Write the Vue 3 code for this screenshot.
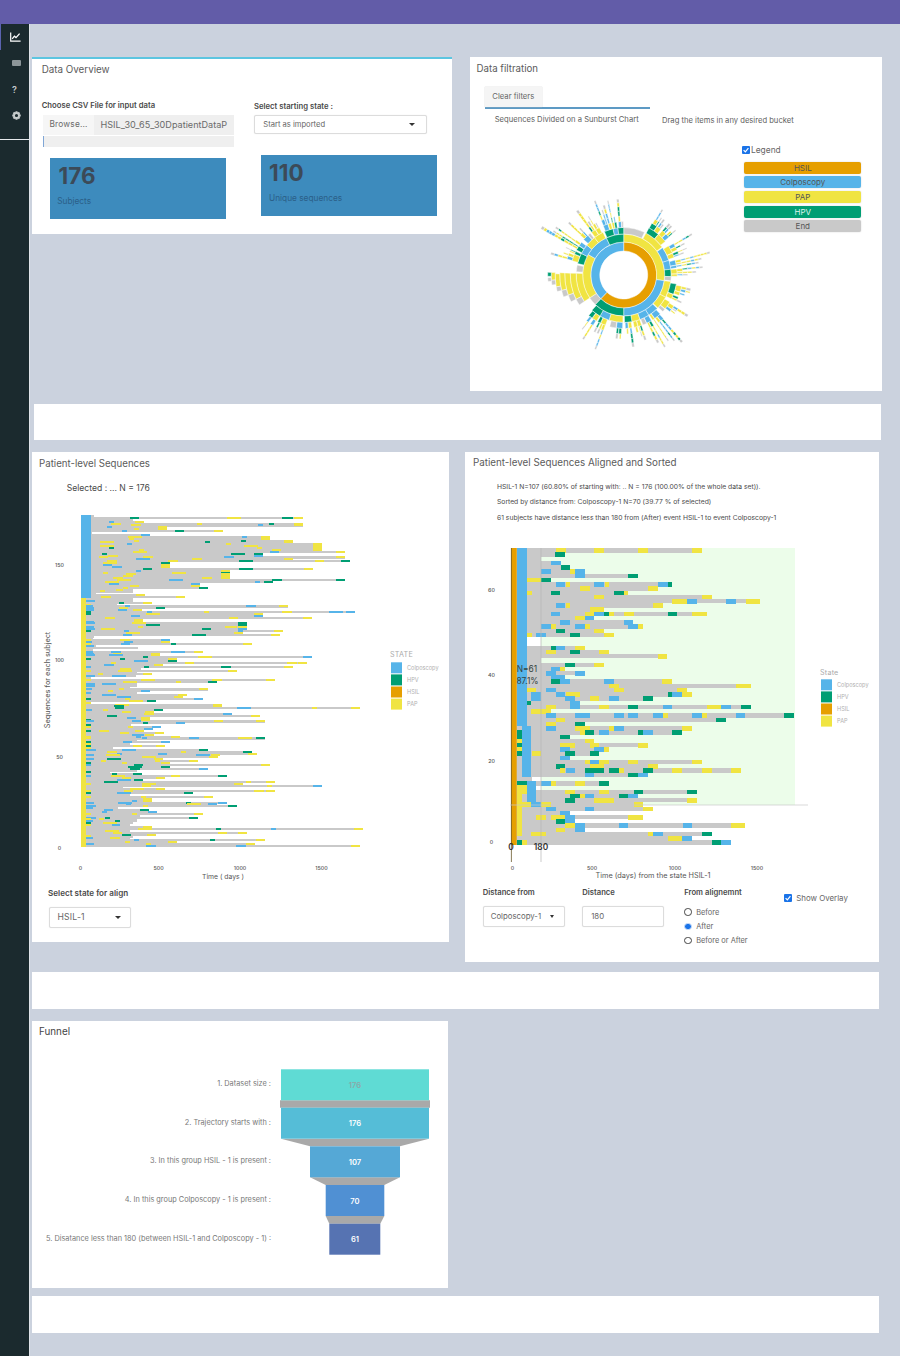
<script setup>
const C = { o: '#e69f00', b: '#56b4e9', y: '#f0e442', g: '#009e73', e: '#c9c9c9' }

function rng(seed) {
  let a = seed
  return () => {
    a |= 0; a = (a + 0x6d2b79f5) | 0
    let t = Math.imul(a ^ (a >>> 15), 1 | a)
    t = (t + Math.imul(t ^ (t >>> 7), 61 | t)) ^ t
    return ((t ^ (t >>> 14)) >>> 0) / 4294967296
  }
}

/* ---------- patient-level chart: [zoomY, zoomX] of the visible row ends ---------- */
const upper = [[196,820],[201,310],[213,820],[218,820],[224,410],[236,580],[252,720],[264,790],[276,875],[282,875],[287,875],[292,875],[297,945],[303,700],[309,700],[314,945],[320,790],[326,960],[337,420],[353,850],[359,600],[365,600],[370,600],[376,600],[382,945],[388,730],[394,510],[405,535],[411,310],[417,310],[433,465],[438,310],[444,310],[450,365],[455,260],[461,775],[466,340],[472,335],[478,690],[483,975],[489,700],[495,845],[500,690],[506,340],[512,650],[518,650],[524,650],[530,650],[535,760],[541,640],[546,540],[551,750],[563,420],[568,330],[574,320],[579,665],[600,520],[608,390],[614,845],[620,440],[631,830],[637,400],[643,790],[649,240],[654,620],[660,320],[665,365],[682,735],[688,560],[693,320],[699,320],[705,300],[710,535],[716,190],[722,320],[728,470],[733,460],[738,520]]
const lower = [[5,420],[10,575],[16,720],[21,990],[27,190],[33,605],[39,410],[44,690],[50,360],[56,705],[63,465],[72,225],[78,190],[90,195],[96,280],[102,450],[107,705],[113,320],[118,420],[124,300],[130,405],[135,250],[141,535],[147,665],[152,680],[158,570],[164,565],[170,400],[175,505],[181,420],[186,720],[192,420],[197,535],[203,280],[209,240],[214,335],[220,310],[225,590],[231,340],[237,735],[243,640],[248,875],[254,280],[260,405],[265,735],[271,490],[277,300],[282,550],[288,300],[293,365],[299,590],[305,560],[311,620],[316,265],[322,190],[327,265],[333,520],[339,330],[344,505],[350,320],[356,320],[361,310],[367,290],[372,300],[378,1000],[384,300],[390,650],[396,280],[401,310],[407,300],[412,705],[418,440],[424,675],[430,990],[434,250]]

const anchors = [
  ...upper.map(([y, x]) => [450 + y / 3, 30 + x / 3]),
  ...lower.map(([y, x]) => [700 + y / 3, 30 + x / 3]),
]

function buildPatient() {
  const r = rng(41)
  const gray = []
  const marks = []
  const pick = () => { const v = r(); return v < 0.5 ? C.y : v < 0.8 ? C.b : C.g }
  const h = 2
  const step = 1.885
  const ends = new Array(176).fill(0)
  anchors.forEach(([y, end]) => {
    const i = Math.min(175, Math.max(0, Math.round((y - 514) / step)))
    ends[i] = Math.max(ends[i], end)
  })
  for (let i = 0; i < 176; i++) {
    const y = 514 + i * step
    let end = ends[i]
    let visible = true
    if (!end) {
      const before = ends[i - 1] || 0
      const after = ends[i + 1] || 0
      if (before && after) end = Math.max(Math.min(before, after), 128 + r() * 40)
      else if (r() < 0.5) end = 125 + r() * 45
      else { end = 91 + r() * 6; visible = false }
    } else if (end < 130 && r() < 0.6) {
      end = 130 + r() * 35
    }
    gray.push({ x: 81, y, w: end - 81, h: 2.1, f: C.e })
    if (y >= 597) {
      const v = r()
      if (v < 0.26) marks.push({ x: 86, y, w: 5 + r() * 5, h, f: C.b })
      else if (v < 0.36) marks.push({ x: 86, y, w: 5, h, f: C.g })
      else if (v < 0.5) marks.push({ x: 86, y, w: 5, h, f: C.y })
    }
    if (!visible) continue
    let x = 98 + r() * 50
    const cap = end - 10
    while (x < cap - 6) {
      const w = 5 + Math.floor(r() * 3) * 4.5
      marks.push({ x, y, w: Math.min(w, cap - x), h, f: pick() })
      x += w + 34 + r() * 110
    }
    if (end - 81 > 60) {
      const v = r()
      marks.push({ x: end - 9, y, w: 9, h, f: v < 0.62 ? C.y : v < 0.82 ? C.g : C.b })
    }
  }
  return [...gray, ...marks]
}
const patientBars = buildPatient()

/* ---------- aligned chart, transcribed row by row ---------- */
const aligned = [
  [710, 'y272-302 y388-418 y520-550 y680-710'],
  [300, 'g270-300'],
  [228, ''],
  [287, 'b257-287'],
  [315, 'g287-315'],
  [360, 'b228-257 y315-330 b330-360'],
  [520, 'b330-360 g490-520'],
  [257, 'y185-228 g228-257'],
  [622, 'b272-300 y303-315 b388-418 y420-433 b580-610 g610-622'],
  [578, 'y345-375 y550-578'],
  [490, 'y185-200 g257-286 g447-476 y476-490'],
  [740, 'y388-418 y710-740'],
  [886, 'y622-665 b667-696 b783-812 y843-886'],
  [593, 'b272-300 y303-315 y563-593'],
  [418, 'y375-418'],
  [725, 'b257-286 y360-388 b388-418 g418-433 y433-447 y476-506 g608-637 y680-725'],
  [388, 'y330-360 b360-388'],
  [505, 'b286-315 b476-505'],
  [535, 'b228-257 y257-272 b330-360 y360-375 b490-520 y520-535'],
  [418, 'g272-300 y388-418'],
  [447, 'y185-200 b213-243 g315-345 y418-447'],
  [185, ''],
  [185, ''],
  [360, 'g257-272 b272-300 y330-360'],
  [433, 'y243-272 g315-345 y403-433'],
  [607, 'y578-607'],
  [228, ''],
  [418, 'g300-330 y388-418'],
  [300, 'b257-286 y286-300'],
  [360, 'b243-272 b330-360'],
  [300, 'b257-300'],
  [622, 'g257-286 b286-315 b418-447 y592-622'],
  [857, 'y433-462 y812-857'],
  [665, 'y185-213 b243-272 y447-476 y637-665'],
  [680, 'b198-228 b272-300 y303-345 g608-622 b622-651 y651-680'],
  [563, 'b198-228 b300-330 y375-403 b433-462 g535-563'],
  [345, 'g185-198 b315-345'],
  [857, 'y243-272 b315-345 y403-433 g490-520 b593-622 y725-768 b768-797 g827-857'],
  [257, 'y198-257'],
  [988, 'b243-272 b330-375 b447-476 b490-520 b563-593 y593-608 b680-710 y710-725 b812-841 g958-988'],
  [783, 'y272-300 g753-783'],
  [360, 'y243-272 g330-360'],
  [680, 'b243-272 y330-375 y433-447 b447-476 y651-680'],
  [650, 'g155-170 y345-360 g360-388 b403-433 g520-535 b535-563 g622-651'],
  [315, 'g155-170 g286-315'],
  [388, 'y155-170 y360-388'],
  [548, 'g155-170 y286-330 y375-403 y520-548'],
  [433, 'y155-170 b286-315 b388-418 y418-433'],
  [403, 'g155-170 y200-228 g300-330 g375-403'],
  [315, 'b286-315'],
  [710, 'y360-375 b375-403 y403-433 y490-520 y680-710'],
  [578, 'g272-300 y375-418 y548-578'],
  [827, 'y286-300 b303-330 g360-418 g433-462 y462-476 g535-563 y622-651 y710-740 y798-827'],
  [550, 'b360-388 g490-520 b520-550'],
  [200, ''],
  [433, 'g155-185 b228-257 y257-272 y330-360 g403-433'],
  [213, 'y155-185'],
  [695, 'y155-185 y300-330 y403-433 g506-535 g666-695'],
  [520, 'y155-170 g315-345 y345-360 b360-388 g462-490 b490-520'],
  [695, 'y155-170 g300-330 y388-447 y666-695'],
  [535, 'y155-198 b198-228 y228-257 y506-535'],
  [563, 'y155-170 b243-272 b360-388 y535-563'],
  [315, 'y155-170 b286-315'],
  [535, 'y155-170 y213-243 y257-300 b300-330 y490-535'],
  [330, 'y155-170 g272-300 b300-330'],
  [841, 'y155-170 y300-330 b330-360 b462-490 b653-680 y798-841'],
  [360, 'y155-170 y272-300 b330-360'],
  [740, 'y155-170 y198-243 y548-563 b563-593 g710-740'],
  [680, 'y608-651 b651-680'],
  [798, 'g155-170 y170-185 g740-768 b768-798'],
]

const zx = (v) => 465 + v / 3
const rowY = (k) => 548.2 + k * 4.235
const alignedGray = aligned.map(([end], k) => ({ x: zx(138), y: rowY(k), w: zx(end) - zx(138), h: 4.4, f: C.e }))
const alignedMarks = aligned.flatMap(([, ev], k) => {
  const y = rowY(k)
  const h = 4.5
  const list = []
  if (k <= 41) list.push({ x: zx(155), y, w: 10, h, f: C.b })
  else if (k <= 53) list.push({ x: zx(170), y, w: 9.5, h, f: C.b })
  else if (k >= 55 && k <= 59) list.push({ x: zx(185), y, w: 9.5, h, f: C.b })
  ev.split(' ').filter(Boolean).forEach((s) => {
    const [a, b] = s.slice(1).split('-').map(Number)
    list.push({ x: zx(a), y, w: (b - a) / 3, h, f: C[s[0]] })
  })
  return list
})
const alignedBars = [...alignedGray, ...alignedMarks]

/* ---------- sunburst ---------- */
const cx = 623.7
const cy = 274
const radii = [24, 33, 41, 47.5, 53.5, 59, 64, 68.5, 72.5, 76, 79.5, 83, 86, 89, 92, 95]

function arc(a0, a1, r0, r1) {
  const p = (a, r) => {
    const t = (a * Math.PI) / 180
    return `${(cx + r * Math.sin(t)).toFixed(2)} ${(cy - r * Math.cos(t)).toFixed(2)}`
  }
  const large = a1 - a0 > 180 ? 1 : 0
  return `M${p(a0, r1)}A${r1} ${r1} 0 ${large} 1 ${p(a1, r1)}L${p(a1, r0)}A${r0} ${r0} 0 ${large} 0 ${p(a0, r0)}Z`
}

function buildSunburst() {
  const r = rng(77)
  const out = []
  const add = (a0, a1, ring, col) => {
    if (ring >= radii.length - 1) return
    out.push({ d: arc(a0, a1, radii[ring], radii[ring + 1]), f: col })
  }
  const color = () => { const v = r(); return v < 0.45 ? C.y : v < 0.68 ? C.b : v < 0.88 ? C.g : C.e }
  /* the first child of a node is the one that keeps growing; the others die soon */
  const grow = (a0, a1, ring, maxRing) => {
    if (ring >= maxRing) return
    const span = a1 - a0
    if (span < 2.2) {
      const col = ring === maxRing - 1 ? C.e : color()
      add(a0, a1, ring, col === C.e && ring < maxRing - 1 ? C.y : col)
      grow(a0, a1, ring + 1, maxRing)
      return
    }
    const mainW = span * (0.38 + r() * 0.2)
    const mainStart = a0 + r() * (span - mainW) * 0.4
    const col = color()
    add(mainStart, mainStart + mainW, ring, col === C.e ? C.y : col)
    grow(mainStart, mainStart + mainW, ring + 1, maxRing)
    const restStart = mainStart + mainW + 0.4
    if (a1 - restStart > 1.2) {
      const restW = Math.min((a1 - restStart) * 0.8, span * 0.4)
      const c2 = color()
      add(restStart, restStart + restW, ring, c2)
      if (c2 !== C.e) grow(restStart, restStart + restW, ring + 1, Math.max(ring + 2, maxRing - 2 - Math.floor(r() * 3)))
    }
  }
  add(0, 224, 0, C.o)
  add(224, 360, 0, C.b)
  ;[[0, 98, C.y], [98, 180, C.b], [180, 224, C.g], [224, 236, C.e], [236, 300, C.y], [300, 335, C.b], [335, 360, C.g]]
    .forEach(([a, b, c]) => add(a, b, 1, c))
  const third = [
    [0, 26, C.e, 0], [28, 54, C.y, 9], [55, 72, C.b, 10], [72, 83, C.b, 13], [83, 92, C.g, 10], [92, 97, C.e, 0],
    [98, 118, C.y, 7], [118, 134, C.y, 9], [135, 148, C.b, 13], [148, 160, C.b, 11], [160, 170, C.y, 7], [170, 179, C.g, 8],
    [181, 198, C.y, 6], [198, 210, C.b, 10], [210, 222, C.g, 9],
    [274, 282, C.e, 0], [284, 297, C.g, 9], [297, 309, C.b, 15], [309, 322, C.y, 9], [322, 334, C.y, 10],
    [336, 347, C.g, 10], [347, 353, C.b, 9], [353, 360, C.g, 9],
  ]
  third.forEach(([a, b, c, max]) => {
    add(a, b, 2, c)
    if (max) grow(a, b, 3, max)
  })
  /* stepped yellow block on the left */
  ;[
    [236, 272, 2, C.y], [243, 272, 3, C.y], [236, 243, 3, C.e], [250, 272, 4, C.y], [243, 250, 4, C.e],
    [256, 272, 5, C.y], [250, 256, 5, C.e], [260, 271, 6, C.y], [256, 260, 6, C.e],
    [262, 266, 7, C.e], [266, 272, 7, C.y], [269, 272, 8, C.g], [265, 268, 8, C.e],
  ].forEach(([a, b, ring, c]) => add(a, b, ring, c))
  return out
}
const sunburst = buildSunburst()

/* ---------- funnel ---------- */
const funnelSteps = [
  { label: '1. Dataset size :', value: 176, x0: 281, x1: 429, y: 1069.3, f: '#5fdbd4', t: '#8aa8a8' },
  { label: '2. Trajectory starts with :', value: 176, x0: 281, x1: 429, y: 1107.7, f: '#55bdd7', t: '#fff' },
  { label: '3. In this group HSIL - 1 is present :', value: 107, x0: 310, x1: 400, y: 1146.3, f: '#55a8d6', t: '#fff' },
  { label: '4. In this group Colposcopy - 1 is present :', value: 70, x0: 325.7, x1: 384.3, y: 1185, f: '#5090d3', t: '#fff' },
  { label: '5. Disatance less than 180 (between HSIL-1 and Colposcopy - 1) :', value: 61, x0: 329.3, x1: 380.3, y: 1223.7, f: '#5673b2', t: '#fff' },
]
const funnelLinks = funnelSteps.slice(1).map((s, i) => {
  const p = funnelSteps[i]
  const top = p.y + 31
  const wide = i === 0 ? 1 : 0
  return `${p.x0 - wide},${top} ${p.x1 + wide},${top} ${s.x1 + wide},${s.y} ${s.x0 - wide},${s.y}`
})

const patientLegend = [['Colposcopy', C.b], ['HPV', C.g], ['HSIL', C.o], ['PAP', C.y]]
const buckets = [
  { name: 'HSIL', cls: 'b-o' }, { name: 'Colposcopy', cls: 'b-b' }, { name: 'PAP', cls: 'b-y' },
  { name: 'HPV', cls: 'b-g' }, { name: 'End', cls: 'b-e' },
]
const gearTeeth = [0, 45, 90, 135, 180, 225, 270, 315]
</script>

<template>
  <div class="app">
    <header class="topbar"></header>
    <div class="shell">
      <aside class="side">
        <div class="side-top">
          <div class="nav active">
            <svg width="11" height="10" viewBox="0 0 11 10"><path d="M.7 .5V9.2H10.6" fill="none" stroke="#fff" stroke-width="1.2"/><path d="M2.2 6.8 4.4 4.2 6 5.6 9.6 1.6" fill="none" stroke="#fff" stroke-width="1.3"/></svg>
          </div>
          <div class="nav nav-tv"><span class="tv"></span></div>
          <div class="nav nav-q">?</div>
          <div class="nav nav-gear">
            <svg width="9" height="9" viewBox="0 0 18 18">
              <rect v-for="t in gearTeeth" :key="t" x="7" y="0.5" width="4" height="4" fill="#c6cbcc" :transform="`rotate(${t} 9 9)`"/>
              <circle cx="9" cy="9" r="5" fill="none" stroke="#c6cbcc" stroke-width="3.6"/>
            </svg>
          </div>
        </div>
      </aside>

      <main class="main">
        <div class="row row-one">
          <section class="card overview">
            <h2 class="title t-ov">Data Overview</h2>
            <div class="ov-grid">
              <div class="ov-file">
                <label class="lbl">Choose CSV File for input data</label>
                <div class="file">
                  <span class="browse">Browse...</span>
                  <span class="fname">HSIL_30_65_30DpatientDataP</span>
                </div>
                <div class="progress"></div>
              </div>
              <div class="ov-state">
                <label class="lbl">Select starting state :</label>
                <div class="select wide"><span>Start as imported</span><i class="caret"></i></div>
              </div>
            </div>
            <div class="boxes">
              <div class="vbox first"><strong>176</strong><span>Subjects</span></div>
              <div class="vbox second"><strong>110</strong><span>Unique sequences</span></div>
            </div>
          </section>

          <section class="card filtration">
            <h2 class="title">Data filtration</h2>
            <div class="tabs"><span class="tab">Clear filters</span></div>
            <div class="captions">
              <span>Sequences Divided on a Sunburst Chart</span>
              <span>Drag the items in any desired bucket</span>
            </div>
            <div class="sun-body">
              <svg class="sun" viewBox="530 127 210 240" width="210" height="240">
                <path v-for="(s, i) in sunburst" :key="i" :d="s.d" :fill="s.f" stroke="#fff" stroke-width="0.45"/>
              </svg>
              <div class="legend">
                <label class="legend-check"><span class="check small"><svg viewBox="0 0 10 10"><path d="M2 5.2 4.2 7.4 8 2.8" fill="none" stroke="#fff" stroke-width="1.5"/></svg></span>Legend</label>
                <div v-for="b in buckets" :key="b.name" class="bucket" :class="b.cls">{{ b.name }}</div>
              </div>
            </div>
          </section>
        </div>

        <div class="strip strip-a"></div>

        <div class="row row-two">
          <section class="card patient">
            <h2 class="title">Patient-level Sequences</h2>
            <p class="selected">Selected : ... N = 176</p>
            <svg class="chart" viewBox="32 505 417 380" width="417" height="380">
              <g shape-rendering="crispEdges">
                <rect v-for="(b, i) in patientBars" :key="i" :x="b.x" :y="b.y" :width="b.w" :height="b.h" :fill="b.f"/>
                <rect x="81" y="597" width="5" height="249" :fill="C.y"/>
                <rect x="81" y="514" width="10" height="83" :fill="C.b"/>
              </g>
              <g class="tick">
                <text x="59.5" y="565.5" text-anchor="middle">150</text>
                <text x="59.5" y="661" text-anchor="middle">100</text>
                <text x="59.5" y="757.5" text-anchor="middle">50</text>
                <text x="59.5" y="848.5" text-anchor="middle">0</text>
                <text x="80.5" y="868.5" text-anchor="middle">0</text>
                <text x="158.5" y="868.5" text-anchor="middle">500</text>
                <text x="240" y="868.5" text-anchor="middle">1000</text>
                <text x="321.5" y="868.5" text-anchor="middle">1500</text>
              </g>
              <text class="axis a-time" x="223" y="878" text-anchor="middle">Time ( days )</text>
              <text class="axis" transform="translate(50 679) rotate(-90)" text-anchor="middle">Sequences for each subject</text>
              <text class="lg-title" x="390" y="656">STATE</text>
              <g v-for="(l, i) in patientLegend" :key="l[0]">
                <rect x="391" :y="661.3 + i * 12.1" width="11" height="11" :fill="l[1]"/>
                <text class="lg" x="407" :y="669 + i * 12">{{ l[0] }}</text>
              </g>
            </svg>
            <div class="align-ctl">
              <label class="lbl l-align">Select state for align</label>
              <div class="select narrow"><span>HSIL-1</span><i class="caret"></i></div>
            </div>
          </section>

          <section class="card sorted">
            <h2 class="title t-sorted">Patient-level Sequences Aligned and Sorted</h2>
            <p class="info i1">HSIL-1 N=107 (60.80% of starting with: .. N = 176 (100.00% of the whole data set)).</p>
            <p class="info i2">Sorted by distance from: Colposcopy-1 N=70 (39.77 % of selected)</p>
            <p class="info i3">61 subjects have distance less than 180 from (After) event HSIL-1 to event Colposcopy-1</p>
            <svg class="chart" viewBox="465 540 414 342" width="414" height="342">
              <rect x="541" y="548" width="254" height="257" fill="#ecfdea"/>
              <g shape-rendering="crispEdges">
                <rect v-for="(b, i) in alignedBars" :key="i" :x="b.x" :y="b.y" :width="b.w" :height="b.h" :fill="b.f"/>
              </g>
              <rect x="511" y="548" width="5.7" height="297" fill="#e69f00"/>
              <line x1="511.4" y1="548" x2="511.4" y2="862" stroke="#6b5a2c" stroke-width="0.8"/>
              <line x1="541" y1="548" x2="541" y2="862" stroke="#b5b5b5" stroke-width="0.7"/>
              <line x1="510" y1="805" x2="808" y2="805" stroke="#c9c9c9" stroke-width="0.7"/>
              <text class="note" x="527" y="672" text-anchor="middle">N=61</text>
              <text class="note" x="527.5" y="684" text-anchor="middle">87.1%</text>
              <text class="mark" x="511" y="850" text-anchor="middle">0</text>
              <text class="mark" x="541" y="850" text-anchor="middle">180</text>
              <g class="tick">
                <text x="491.5" y="592" text-anchor="middle">60</text>
                <text x="491.5" y="677" text-anchor="middle">40</text>
                <text x="491.5" y="763" text-anchor="middle">20</text>
                <text x="491.5" y="844" text-anchor="middle">0</text>
                <text x="512.5" y="870" text-anchor="middle">0</text>
                <text x="592" y="870" text-anchor="middle">500</text>
                <text x="675" y="870" text-anchor="middle">1000</text>
                <text x="757" y="870" text-anchor="middle">1500</text>
              </g>
              <text class="axis" x="653" y="878" text-anchor="middle">Time (days) from the state HSIL-1</text>
              <text class="lg-title" x="820" y="675">State</text>
              <g v-for="(l, i) in patientLegend" :key="l[0]">
                <rect x="821" :y="679.3 + i * 12.1" width="11" height="11" :fill="l[1]"/>
                <text class="lg" x="837" :y="687 + i * 12">{{ l[0] }}</text>
              </g>
            </svg>
            <div class="controls">
              <div class="ctl c1">
                <label class="lbl">Distance from</label>
                <div class="select mid"><span>Colposcopy-1</span><i class="caret small"></i></div>
              </div>
              <div class="ctl c2">
                <label class="lbl">Distance</label>
                <div class="select mid input"><span>180</span></div>
              </div>
              <div class="ctl c3">
                <label class="lbl">From alignemnt</label>
                <div class="radios">
                  <div class="radio"><i></i>Before</div>
                  <div class="radio on"><i></i>After</div>
                  <div class="radio"><i></i>Before or After</div>
                </div>
              </div>
              <div class="ctl c4">
                <span class="check"><svg viewBox="0 0 10 10"><path d="M2 5.2 4.2 7.4 8 2.8" fill="none" stroke="#fff" stroke-width="1.5"/></svg></span>
                <span>Show Overlay</span>
              </div>
            </div>
          </section>
        </div>

        <div class="strip strip-b"></div>

        <section class="card funnel">
          <h2 class="title">Funnel</h2>
          <svg class="chart" viewBox="32 1040 416 240" width="416" height="240">
            <polygon v-for="(p, i) in funnelLinks" :key="i" :points="p" fill="#a9a9a9"/>
            <g v-for="s in funnelSteps" :key="s.label">
              <rect :x="s.x0" :y="s.y" :width="s.x1 - s.x0" height="31" :fill="s.f"/>
              <text class="f-val" :x="355" :y="s.y + 18.5" text-anchor="middle" :fill="s.t">{{ s.value }}</text>
              <text class="f-lbl" x="271" :y="s.y + 17" text-anchor="end">{{ s.label }}</text>
            </g>
          </svg>
        </section>

        <div class="strip strip-c"></div>
      </main>
    </div>
  </div>
</template>

<style>
html, body { margin: 0; background: #cbd2de; }
</style>

<style scoped>
* { box-sizing: border-box; }
.app { width: 900px; height: 1356px; overflow: hidden; font-family: Inter, "Noto Sans", sans-serif; color: #555; background: #cbd2de; }
.topbar { height: 24px; background: #625ca8; }
.shell { display: flex; }
.side { width: 30px; height: 1332px; background: #1b2a2e; border-right: 1px solid #dfe3e8; flex: none; }
.side-top { height: 116px; border-bottom: 1px solid #e6e9ec; }
.nav { height: 26px; display: flex; align-items: center; justify-content: center; color: #c6cbcc; padding-left: 1px; }
.nav.active { border-left: 1px solid #5a63b0; padding-top: 0; height: 26px; padding-right: 1px; }
.nav-tv { padding-left: 3px; }
.tv { width: 9px; height: 6.5px; border-radius: 1px; background: #8d9699; display: block; }
.nav-q { font-size: 9px; font-weight: 600; padding-right: 1px; }
.nav-gear { padding-left: 3px; }

.main { flex: 1; padding: 33px 0 0 2px; min-width: 0; }
.row { display: flex; align-items: flex-start; }
.card { background: #fff; display: block; }
.title { margin: 0; font-size: 9.7px; line-height: 13px; font-weight: 400; color: #5b5b5b; }
.t-ov { font-size: 9.8px; }

.row-one { gap: 17.5px; }
.overview { width: 420px; height: 177px; border-top: 2px solid #5cc5e0; padding: 4px 0 0 9.7px; }
.ov-grid { display: flex; margin-top: 24px; }
.ov-file { width: 212.3px; }
.ov-state { width: 190px; padding-top: 0.5px; }
.lbl { display: block; font-size: 7.7px; line-height: 11px; font-weight: 600; color: #4a4a4a; white-space: nowrap; }
.file { display: flex; width: 191px; height: 19.5px; margin: 4px 0 0 1.3px; align-items: center; }
.browse { width: 51px; height: 100%; background: #f6f6f6; font-size: 8.3px; line-height: 19.5px; padding-left: 6.5px; color: #6a6a6a; letter-spacing: .2px; }
.fname { flex: 1; height: 100%; background: #efefef; font-size: 9.1px; line-height: 20px; padding-left: 6.5px; color: #6a6a6a; white-space: nowrap; overflow: hidden; }
.progress { width: 191px; height: 11px; margin: 1.5px 0 0 1.3px; background: #efefef; border-left: 1px solid #7fa6d6; }
.select { display: flex; align-items: center; justify-content: space-between; border: 1px solid #dcdcdc; border-radius: 2px; background: #fff; color: #666; box-shadow: 0 0 1px #ddd; }
.select.wide { width: 173px; height: 19px; margin: 3.5px 0 0 .3px; padding: 0 11px .5px 8px; font-size: 7.6px; }
.select.narrow { width: 81.5px; height: 21px; margin: 8px 0 0 1px; padding: 0 9px 0 7.5px; font-size: 8.6px; letter-spacing: .2px; }
.select.mid { width: 82px; height: 21px; padding: 0 10px 0 7px; font-size: 7.8px; margin-top: 7.5px; }
.select.input { width: 81.5px; padding-left: 8px; }
.caret { width: 0; height: 0; border: 3px solid transparent; border-top: 3.5px solid #333; border-bottom: 0; display: block; }
.caret.small { border-width: 2.5px; border-top-width: 3px; border-bottom-width: 0; border-bottom: 0; }
.boxes { display: flex; align-items: flex-start; gap: 35px; margin-top: 11px; margin-left: 8.3px; }
.vbox { width: 176px; height: 60.5px; background: #3d8bbd; display: flex; flex-direction: column; color: #2b5f88; font-size: 8.3px; }
.vbox strong { font-size: 22.5px; line-height: 26px; font-weight: 700; color: #3c4a58; margin-top: 4.5px; }
.vbox span { margin-top: 6.2px; line-height: 12px; }
.vbox.first { padding-left: 8.5px; }
.vbox.first span { margin-left: -1.3px; }
.vbox.second { margin-top: -3px; padding-left: 8px; }

.filtration { width: 412.5px; height: 334px; padding: 4.5px 0 0 7px; }
.tabs { width: 165px; margin: 12.8px 0 0 8.5px; border-bottom: 2px solid #5d9ac4; display: flex; }
.tab { width: 56.5px; height: 19.5px; background: #f5f5f5; box-shadow: 0 0 1px #bbb; font-size: 7.7px; line-height: 19.5px; padding-left: 7.3px; color: #666; }
.captions { display: flex; font-size: 7.63px; line-height: 11px; color: #5f5f5f; margin: 5.7px 0 0 18.2px; }
.captions span:first-child { width: 167.3px; white-space: nowrap; }
.captions span:last-child { padding-top: .7px; white-space: nowrap; }
.sun-body { display: flex; margin: 1.5px 0 0 -7px; }
.sun { flex: none; margin-left: 60.5px; display: block; }
.legend { margin-left: 2px; width: 120px; padding-top: 16px; }
.legend-check { display: flex; align-items: center; font-size: 8.4px; line-height: 12px; color: #666; gap: 1px; margin-bottom: 6px; }
.check { display: block; width: 8px; height: 8px; background: #1a73e8; border-radius: 1px; flex: none; }
.check svg { display: block; }
.bucket { margin: 0 0 2.7px 2.3px; width: 117px; height: 12px; border-radius: 2px; text-align: center; font-size: 8px; line-height: 12px; color: #555; box-shadow: 0 0 1.5px #ccc; }
.b-o { background: #e69f00; }
.b-b { background: #56b4e9; }
.b-y { background: #f0e442; }
.b-g { background: #009e73; color: #dff3ec; }
.b-e { background: #c9c9c9; }

.strip { background: #fff; height: 37px; width: 847px; }
.strip-a { height: 36px; margin: 13px 0 0 2px; }
.strip-b { margin: 10px 0 0 0; }
.strip-c { margin: 8px 0 0 0; }

.row-two { gap: 16px; margin-top: 12px; }
.patient { width: 417px; height: 490px; padding-top: 4.5px; }
.patient .title { padding-left: 7px; }
.selected { margin: 12px 0 0 34.7px; font-size: 8.6px; line-height: 12px; color: #4a4a4a; }
.chart { display: block; }
.patient .chart { margin-top: 12px; }
.align-ctl { padding: 2px 0 0 16px; }
.l-align { font-size: 8.1px; }
.sorted { width: 414px; height: 510px; padding-top: 3.5px; }
.t-sorted { padding-left: 8px; font-size: 9.8px; }
.info { margin: 0 0 0 32px; font-size: 6.75px; line-height: 10px; color: #4a4a4a; white-space: nowrap; }
.i1 { margin-top: 13.5px; }
.i2 { margin-top: 4.7px; }
.i3 { margin-top: 6px; }
.sorted .chart { margin-top: 17.3px; }
.controls { display: flex; padding: 5.5px 0 0 18px; }
.ctl { flex: none; }
.c1 { width: 99.5px; margin-left: -.3px; }
.c2 { width: 102px; }
.c3 { width: 100px; }
.c4 { display: flex; align-items: center; gap: 4px; font-size: 7.9px; height: 10px; margin-top: 5.5px; color: #666; }
.radios { margin-top: 6.5px; }
.radio { display: flex; align-items: center; gap: 4.5px; height: 14.3px; font-size: 7.4px; color: #666; }
.radio i { display: block; width: 7.5px; height: 7.5px; border: 1px solid #444; border-radius: 50%; }
.radio.on i { border: 1.5px solid #cfe0fa; background: #1a73e8; }

.funnel { width: 416px; height: 267px; margin-top: 12px; padding-top: 3.5px; }
.funnel .title { padding-left: 7px; color: #444; font-size: 9.85px; line-height: 12.5px; }
.funnel .chart { margin-top: 3px; }

.tick text { font-size: 5.3px; fill: #555; font-weight: 500; }
.axis { font-size: 7.3px; fill: #555; }
.a-time { font-size: 6.8px; }
.lg-title { font-size: 7.2px; fill: #aaa; letter-spacing: .2px; }
.lg { font-size: 5.6px; fill: #b0b0b0; }
.note { font-size: 8.4px; fill: #33423f; }
.mark { font-size: 8.3px; fill: #333; font-weight: 600; }
.f-val { font-size: 7.6px; font-weight: 600; }
.f-lbl { font-size: 7.35px; fill: #777; }
</style>
